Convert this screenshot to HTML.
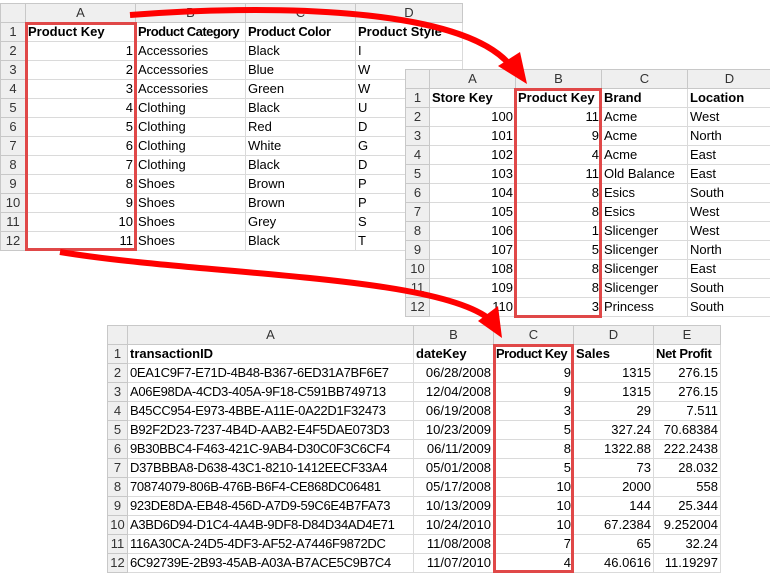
<!DOCTYPE html>
<html><head><meta charset="utf-8"><style>
body{margin:0;width:770px;height:580px;background:#fff;position:relative;overflow:hidden;font-family:"Liberation Sans",sans-serif;}
table{position:absolute;border-collapse:collapse;table-layout:fixed;font-size:13px;color:#000;background:#fff}
td{border:1px solid #dadada;height:18px;padding:0 2px;white-space:nowrap;overflow:visible;line-height:18px}
tr.h td{background:#efefef;color:#333;text-align:center;border-color:#c8c8c8;height:18px}
td.r{background:#efefef;color:#333;text-align:center;border-color:#c8c8c8;padding:0}
td.n{text-align:right}
.b{font-weight:bold}
.corner{position:relative}
.box{position:absolute;border:3px solid #e04848;box-sizing:border-box}
.mono{letter-spacing:-0.3px}
</style></head><body>

<table style="left:0;top:3px;width:462px">
<colgroup><col style="width:25px"><col style="width:110px"><col style="width:110px"><col style="width:110px"><col style="width:107px"></colgroup>
<tr class="h"><td></td><td>A</td><td>B</td><td>C</td><td>D</td></tr>
<tr><td class="r">1</td><td class="b">Product Key</td><td class="b" style="letter-spacing:-0.5px">Product Category</td><td class="b" style="letter-spacing:-0.3px">Product Color</td><td class="b">Product Style</td></tr>
<tr><td class="r">2</td><td class="n">1</td><td>Accessories</td><td>Black</td><td>I</td></tr>
<tr><td class="r">3</td><td class="n">2</td><td>Accessories</td><td>Blue</td><td>W</td></tr>
<tr><td class="r">4</td><td class="n">3</td><td>Accessories</td><td>Green</td><td>W</td></tr>
<tr><td class="r">5</td><td class="n">4</td><td>Clothing</td><td>Black</td><td>U</td></tr>
<tr><td class="r">6</td><td class="n">5</td><td>Clothing</td><td>Red</td><td>D</td></tr>
<tr><td class="r">7</td><td class="n">6</td><td>Clothing</td><td>White</td><td>G</td></tr>
<tr><td class="r">8</td><td class="n">7</td><td>Clothing</td><td>Black</td><td>D</td></tr>
<tr><td class="r">9</td><td class="n">8</td><td>Shoes</td><td>Brown</td><td>P</td></tr>
<tr><td class="r">10</td><td class="n">9</td><td>Shoes</td><td>Brown</td><td>P</td></tr>
<tr><td class="r">11</td><td class="n">10</td><td>Shoes</td><td>Grey</td><td>S</td></tr>
<tr><td class="r">12</td><td class="n">11</td><td>Shoes</td><td>Black</td><td>T</td></tr>
</table>
<div class="box" style="left:25px;top:22px;width:112px;height:229px"></div>

<table style="left:405px;top:69px;width:366px">
<colgroup><col style="width:24px"><col style="width:86px"><col style="width:86px"><col style="width:86px"><col style="width:84px"></colgroup>
<tr class="h"><td></td><td>A</td><td>B</td><td>C</td><td>D</td></tr>
<tr><td class="r">1</td><td class="b">Store Key</td><td class="b">Product Key</td><td class="b">Brand</td><td class="b">Location</td></tr>
<tr><td class="r">2</td><td class="n">100</td><td class="n">11</td><td>Acme</td><td>West</td></tr>
<tr><td class="r">3</td><td class="n">101</td><td class="n">9</td><td>Acme</td><td>North</td></tr>
<tr><td class="r">4</td><td class="n">102</td><td class="n">4</td><td>Acme</td><td>East</td></tr>
<tr><td class="r">5</td><td class="n">103</td><td class="n">11</td><td>Old Balance</td><td>East</td></tr>
<tr><td class="r">6</td><td class="n">104</td><td class="n">8</td><td>Esics</td><td>South</td></tr>
<tr><td class="r">7</td><td class="n">105</td><td class="n">8</td><td>Esics</td><td>West</td></tr>
<tr><td class="r">8</td><td class="n">106</td><td class="n">1</td><td>Slicenger</td><td>West</td></tr>
<tr><td class="r">9</td><td class="n">107</td><td class="n">5</td><td>Slicenger</td><td>North</td></tr>
<tr><td class="r">10</td><td class="n">108</td><td class="n">8</td><td>Slicenger</td><td>East</td></tr>
<tr><td class="r">11</td><td class="n">109</td><td class="n">8</td><td>Slicenger</td><td>South</td></tr>
<tr><td class="r">12</td><td class="n">110</td><td class="n">3</td><td>Princess</td><td>South</td></tr>
</table>
<div class="box" style="left:514px;top:88px;width:88px;height:230px"></div>

<table style="left:107px;top:325px;width:613px">
<colgroup><col style="width:20px"><col style="width:286px"><col style="width:80px"><col style="width:80px"><col style="width:80px"><col style="width:67px"></colgroup>
<tr class="h"><td></td><td>A</td><td>B</td><td>C</td><td>D</td><td>E</td></tr>
<tr><td class="r">1</td><td class="b">transactionID</td><td class="b">dateKey</td><td class="b" style="letter-spacing:-0.5px">Product Key</td><td class="b">Sales</td><td class="b" style="letter-spacing:-0.3px">Net Profit</td></tr>
<tr><td class="r">2</td><td class="mono">0EA1C9F7-E71D-4B48-B367-6ED31A7BF6E7</td><td class="n">06/28/2008</td><td class="n">9</td><td class="n">1315</td><td class="n">276.15</td></tr>
<tr><td class="r">3</td><td class="mono">A06E98DA-4CD3-405A-9F18-C591BB749713</td><td class="n">12/04/2008</td><td class="n">9</td><td class="n">1315</td><td class="n">276.15</td></tr>
<tr><td class="r">4</td><td class="mono">B45CC954-E973-4BBE-A11E-0A22D1F32473</td><td class="n">06/19/2008</td><td class="n">3</td><td class="n">29</td><td class="n">7.511</td></tr>
<tr><td class="r">5</td><td class="mono">B92F2D23-7237-4B4D-AAB2-E4F5DAE073D3</td><td class="n">10/23/2009</td><td class="n">5</td><td class="n">327.24</td><td class="n">70.68384</td></tr>
<tr><td class="r">6</td><td class="mono">9B30BBC4-F463-421C-9AB4-D30C0F3C6CF4</td><td class="n">06/11/2009</td><td class="n">8</td><td class="n">1322.88</td><td class="n">222.2438</td></tr>
<tr><td class="r">7</td><td class="mono">D37BBBA8-D638-43C1-8210-1412EECF33A4</td><td class="n">05/01/2008</td><td class="n">5</td><td class="n">73</td><td class="n">28.032</td></tr>
<tr><td class="r">8</td><td class="mono">70874079-806B-476B-B6F4-CE868DC06481</td><td class="n">05/17/2008</td><td class="n">10</td><td class="n">2000</td><td class="n">558</td></tr>
<tr><td class="r">9</td><td class="mono">923DE8DA-EB48-456D-A7D9-59C6E4B7FA73</td><td class="n">10/13/2009</td><td class="n">10</td><td class="n">144</td><td class="n">25.344</td></tr>
<tr><td class="r">10</td><td class="mono">A3BD6D94-D1C4-4A4B-9DF8-D84D34AD4E71</td><td class="n">10/24/2010</td><td class="n">10</td><td class="n">67.2384</td><td class="n">9.252004</td></tr>
<tr><td class="r">11</td><td class="mono">116A30CA-24D5-4DF3-AF52-A7446F9872DC</td><td class="n">11/08/2008</td><td class="n">7</td><td class="n">65</td><td class="n">32.24</td></tr>
<tr><td class="r">12</td><td class="mono">6C92739E-2B93-45AB-A03A-B7ACE5C9B7C4</td><td class="n">11/07/2010</td><td class="n">4</td><td class="n">46.0616</td><td class="n">11.19297</td></tr>
</table>
<div class="box" style="left:493px;top:344px;width:81px;height:229px"></div>

<svg style="position:absolute;left:0;top:0" width="770" height="580">
<path d="M130 15 C 260 5, 460 5, 510 65" fill="none" stroke="#f00" stroke-width="6"/>
<polygon points="498,66 527,84 520,52" fill="#f00"/>
<path d="M60 252 C 200 275, 430 275, 488 318" fill="none" stroke="#f00" stroke-width="6"/>
<polygon points="478,321 502,338 498,306" fill="#f00"/>
</svg>
</body></html>
